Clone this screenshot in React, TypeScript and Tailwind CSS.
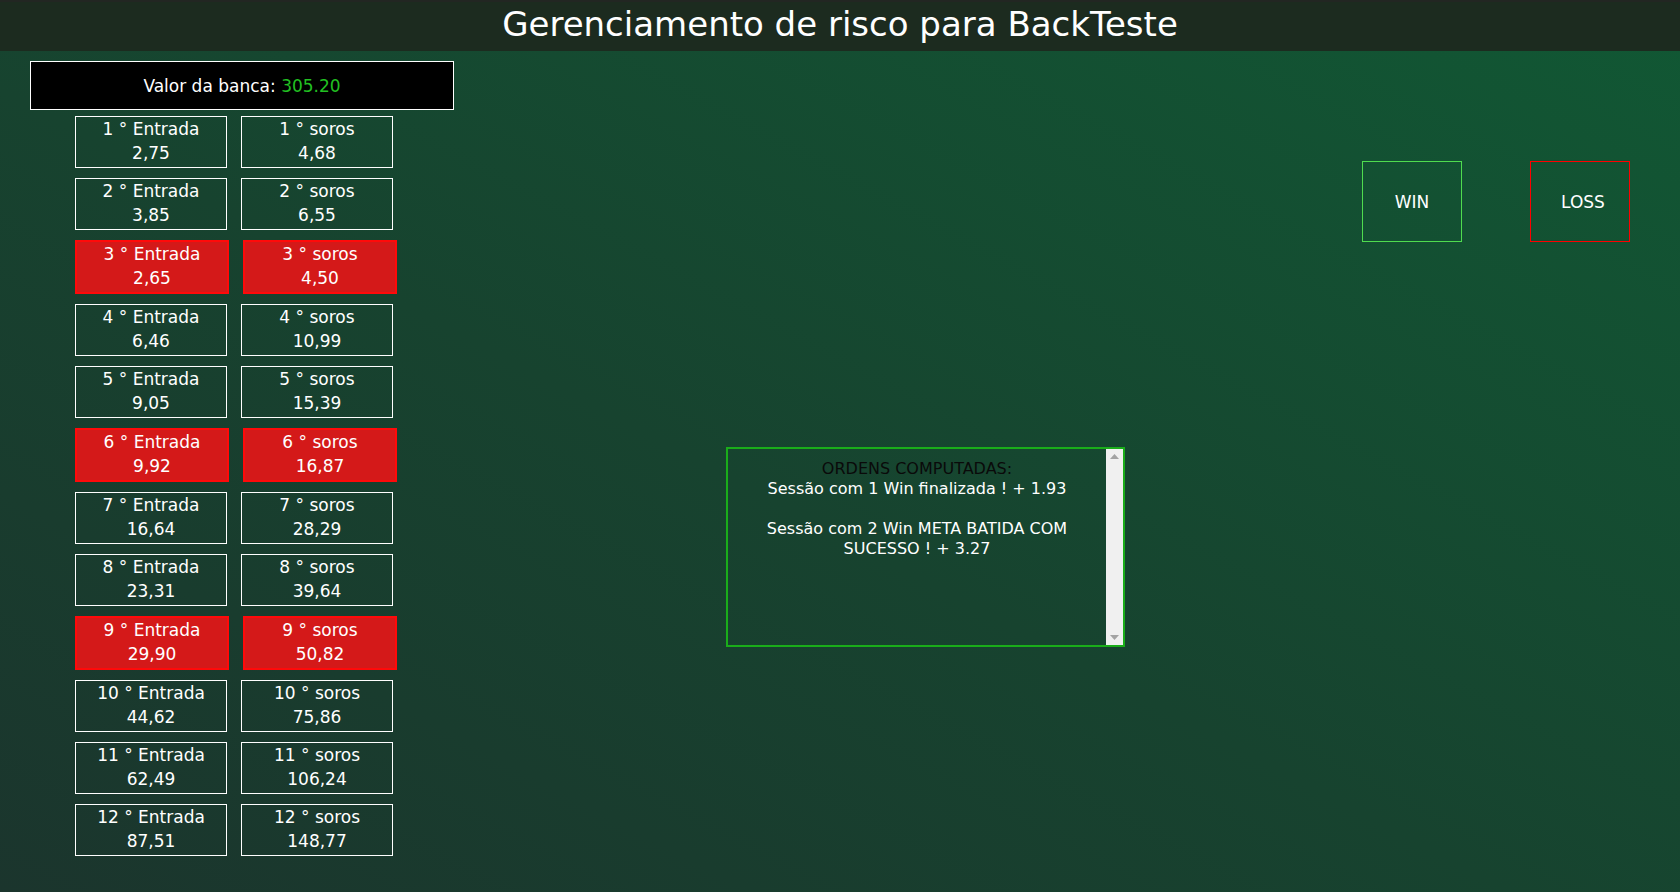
import React from "react"

const rows = [
  { n: 1, e: "2,75", s: "4,68", red: false },
  { n: 2, e: "3,85", s: "6,55", red: false },
  { n: 3, e: "2,65", s: "4,50", red: true },
  { n: 4, e: "6,46", s: "10,99", red: false },
  { n: 5, e: "9,05", s: "15,39", red: false },
  { n: 6, e: "9,92", s: "16,87", red: true },
  { n: 7, e: "16,64", s: "28,29", red: false },
  { n: 8, e: "23,31", s: "39,64", red: false },
  { n: 9, e: "29,90", s: "50,82", red: true },
  { n: 10, e: "44,62", s: "75,86", red: false },
  { n: 11, e: "62,49", s: "106,24", red: false },
  { n: 12, e: "87,51", s: "148,77", red: false },
]

function Cell({ label, value, red }: { label: string; value: string; red: boolean }) {
  return (
    <div
      className={
        red
          ? "w-[154px] h-[54px] border-2 border-[#ff0a0a] bg-[#d41919] text-center text-white text-[17px] leading-[24px]"
          : "w-[152px] h-[52px] border border-white text-center text-white text-[17px] leading-[24px]"
      }
    >
      <div className="whitespace-nowrap">{label}</div>
      <div>{value}</div>
    </div>
  )
}

export default function App() {
  return (
    <div
      className="min-h-[892px] w-full bg-[linear-gradient(to_top_right,#1b352d,#17432f_45%,#115834)] text-white"
      style={{ fontFamily: '"DejaVu Sans", sans-serif' }}
    >
      {/* HEADER */}
      <div className="h-[51px] bg-[#1c2b1f] border-t-2 border-[#222622] flex items-start justify-center">
        <h1 className="text-[34px] leading-[44px] text-white">
          Gerenciamento de risco para BackTeste
        </h1>
      </div>

      <div className="flex">
        {/* PAINEL ESQUERDO */}
        <div className="w-[454px] pl-[30px] pt-[10px]">
          <div className="h-[49px] bg-black border border-white flex items-center justify-center text-[17px] pt-[2px]">
            <span>
              Valor da banca: <span className="text-[#22c022]">305.20</span>
            </span>
          </div>

          <div className="mt-[6px] ml-[45px] flex flex-col gap-[10px]">
            {rows.map((r) => (
              <div key={r.n} className="flex gap-[14px]">
                <Cell label={`${r.n} ° Entrada`} value={r.e} red={r.red} />
                <Cell label={`${r.n} ° soros`} value={r.s} red={r.red} />
              </div>
            ))}
          </div>
        </div>

        {/* PAINEL DIREITO */}
        <div className="flex-1 flex flex-col">
          <div className="mt-[110px] flex justify-end gap-[68px] pr-[50px]">
            <button className="w-[100px] h-[81px] border border-[#4fdc4f] text-[17px] text-white pt-[2px]">
              WIN
            </button>
            <button className="w-[100px] h-[81px] border border-[#ff0000] text-[17px] text-white pt-[2px] pl-[6px]">
              LOSS
            </button>
          </div>

          <div className="mt-[205px] ml-[272px] w-[399px] h-[200px] border-2 border-[#1aad1a] flex">
            <div className="flex-1 pt-[10px] text-center text-[16px] leading-[20px] text-white">
              <div className="text-[#0a0a0a]">ORDENS COMPUTADAS:</div>
              <div>Sessão com 1 Win finalizada ! + 1.93</div>
              <div>&nbsp;</div>
              <div>Sessão com 2 Win META BATIDA COM</div>
              <div>SUCESSO ! + 3.27</div>
            </div>
            <div className="w-[17px] bg-[#f0f0f0] flex flex-col justify-between items-center py-[5px]">
              <svg width="9" height="5" viewBox="0 0 9 5">
                <path d="M0 5 L4.5 0 L9 5 Z" fill="#a3a3a3" />
              </svg>
              <svg width="9" height="5" viewBox="0 0 9 5">
                <path d="M0 0 L4.5 5 L9 0 Z" fill="#a3a3a3" />
              </svg>
            </div>
          </div>
        </div>
      </div>
    </div>
  )
}
